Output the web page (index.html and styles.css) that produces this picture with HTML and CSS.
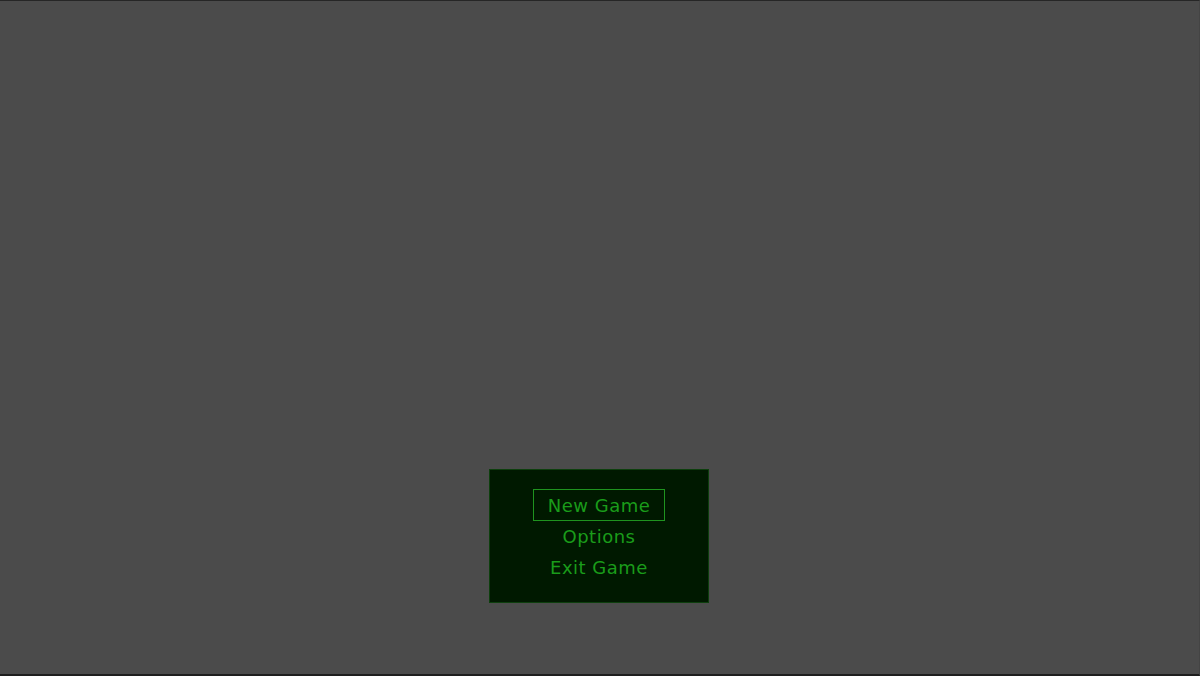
FILE: index.html
```html
<!DOCTYPE html>
<html lang="en">
<head>
<meta charset="utf-8">
<title>Main Menu</title>
<link rel="stylesheet" href="styles.css">
</head>
<body>
<main class="screen">
  <nav class="menu">
    <div class="menu-item selected">New Game</div>
    <div class="menu-item">Options</div>
    <div class="menu-item">Exit Game</div>
  </nav>
</main>
</body>
</html>
```
FILE: styles.css
```css
html, body {
  margin: 0;
  padding: 0;
  background: #4b4b4b;
}
.screen {
  box-sizing: border-box;
  height: 676px;
  width: 1200px;
  border-top: 1px solid #262626;
  border-bottom: 2px solid #1e1e1e;
  border-right: 1px solid #444;
  display: flex;
  flex-direction: column;
  align-items: center;
  justify-content: flex-end;
  padding-bottom: 71px;
  padding-right: 1px;
}
.menu {
  box-sizing: border-box;
  width: 220px;
  background: #001900;
  border: 1px solid #0d3f0d;
  padding: 19px 0 19px;
  display: flex;
  flex-direction: column;
  align-items: center;
  font-family: "DejaVu Sans", "Liberation Sans", sans-serif;
  font-size: 18px;
  letter-spacing: 0.5px;
  color: #1a9c1a;
}
.menu-item {
  line-height: 31px;
  height: 31px;
  text-align: center;
}
.menu-item.selected {
  box-sizing: border-box;
  width: 132px;
  height: 32px;
  line-height: 31px;
  border: 1px solid #1f941f;
}
```
